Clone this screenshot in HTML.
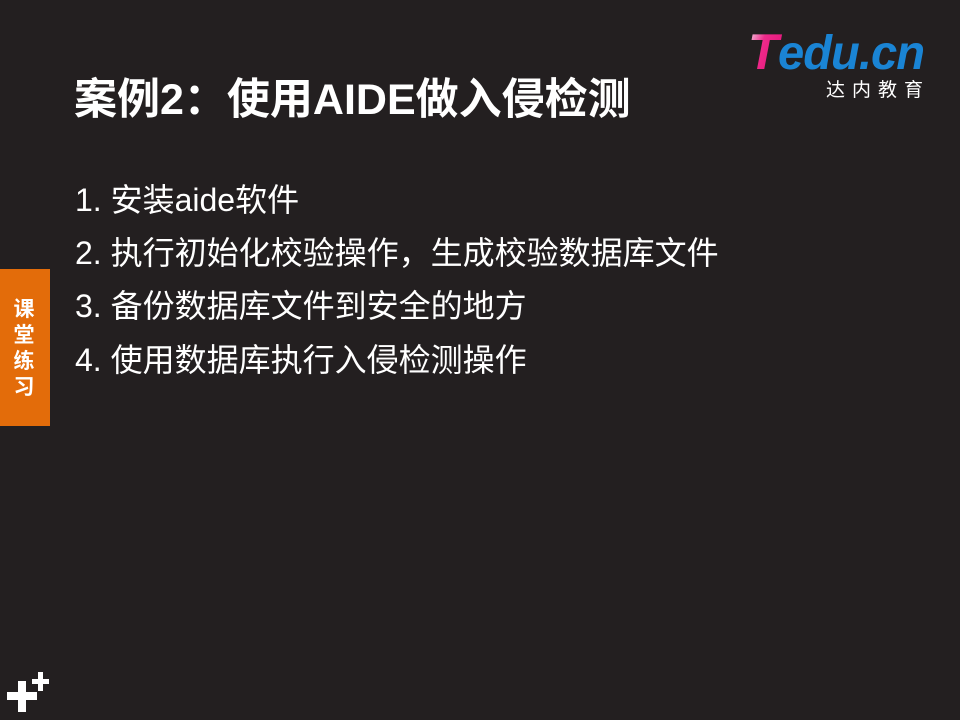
<!DOCTYPE html>
<html><head><meta charset="utf-8"><style>
html,body{margin:0;padding:0}
body{width:960px;height:720px;background:#231f20;position:relative;overflow:hidden;font-family:"Liberation Sans","Noto Sans CJK SC",sans-serif;color:#fff}
.t{position:absolute;left:74px;top:74px;font-size:43px;font-weight:bold;white-space:nowrap;line-height:52px}
.li{position:absolute;left:75px;font-size:32px;white-space:nowrap;line-height:40px}
.side{position:absolute;left:0;top:269px;width:50px;height:157px;background:#e36c0a}
.side div{position:absolute;left:12px;top:28px;width:24px;font-size:21px;font-weight:bold;line-height:26px;text-align:center}
.p{position:absolute;background:#fff}
</style></head><body>
<div class="t">案例2：使用AIDE做入侵检测</div>
<div class="li" style="top:180px">1. 安装aide软件</div>
<div class="li" style="top:233px">2. 执行初始化校验操作，生成校验数据库文件</div>
<div class="li" style="top:286px">3. 备份数据库文件到安全的地方</div>
<div class="li" style="top:340px">4. 使用数据库执行入侵检测操作</div>
<div class="side"><div>课堂练习</div></div>
<div class="p" style="left:7px;top:692px;width:30px;height:8px"></div>
<div class="p" style="left:18px;top:681px;width:8px;height:31px"></div>
<div class="p" style="left:32px;top:679px;width:17px;height:5px"></div>
<div class="p" style="left:38px;top:672px;width:5px;height:19px"></div>
<svg style="position:absolute;left:748px;top:26px" width="185" height="48">
<defs><linearGradient id="g" x1="0" y1="0" x2="1" y2="0.6"><stop offset="0" stop-color="#f5f0f5"/><stop offset="0.45" stop-color="#ee2a8a"/><stop offset="1" stop-color="#e3147a"/></linearGradient></defs>
<text x="0" y="43" font-family="Liberation Sans" font-style="italic" font-weight="bold" font-size="50" fill="url(#g)">T</text>
<text x="30" y="43" font-family="Liberation Sans" font-style="italic" font-weight="bold" font-size="48" fill="#1a84d4" letter-spacing="-1" textLength="146" lengthAdjust="spacingAndGlyphs">edu.cn</text>
</svg>
<div style="position:absolute;left:826px;top:75px;font-size:19px;letter-spacing:7px;white-space:nowrap">达内教育</div>
</body></html>
